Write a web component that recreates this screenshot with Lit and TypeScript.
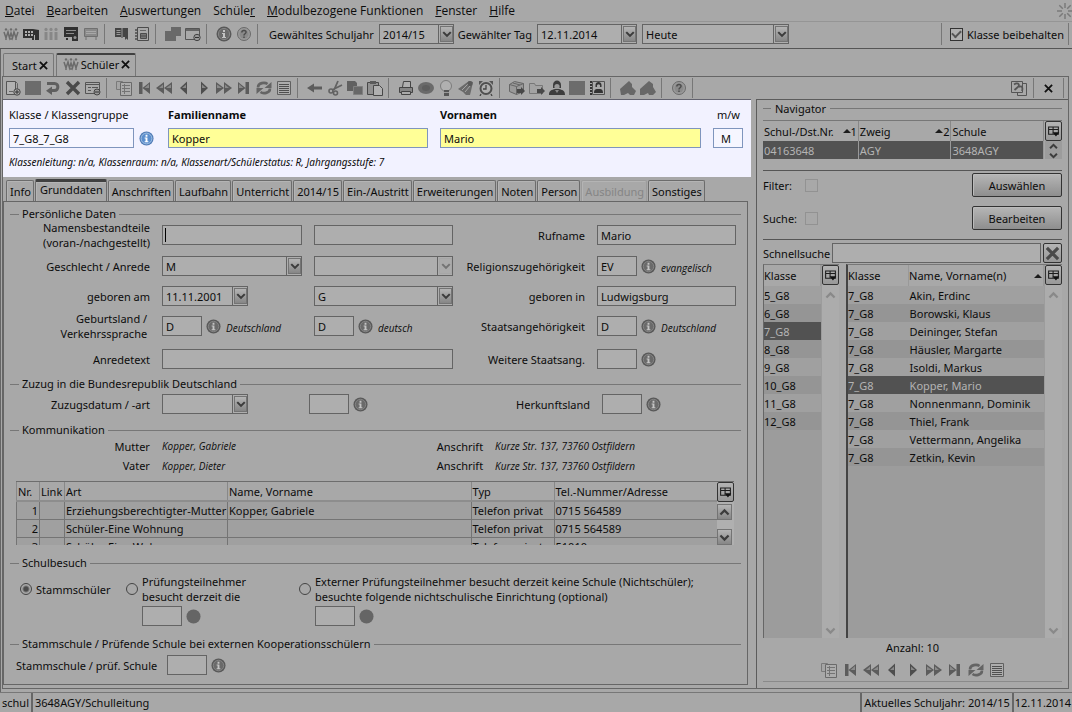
import { LitElement, html, css, svg, nothing } from "lit";
import { customElement, property } from "lit/decorators.js";
import { classMap } from "lit/directives/class-map.js";

const shapes: Record<string, unknown> = {
  pupils: svg`<g fill="#6b6b6b" stroke="#6b6b6b"><circle cx="3" cy="3.4" r="1.2" stroke="none"/><circle cx="8" cy="3.4" r="1.2" stroke="none"/><circle cx="13" cy="3.4" r="1.2" stroke="none"/><path fill="none" stroke-width="1.5" d="M1 6l2 6 2-6 1.500 6L8 7l1.500 5L11 6l2 6 2-6M3 12v2M8 12v2M13 12v2"/></g>`,
  pupilsDim: svg`<g fill="#878787"><circle cx="3" cy="3.400" r="1.600"/><circle cx="8" cy="3.400" r="1.600"/><circle cx="13" cy="3.400" r="1.600"/><path d="M1.500 6h3v8h-3zM6.500 6h3v8h-3zM11.500 6h3v8h-3z"/></g>`,
  building: svg`<path fill="#303030" d="M0 3h10l6 1v10H9v-2H0z"/><path fill="#b0b0b0" d="M2 5h2v2H2zM5 5h2v2H5zM8 5h2v2H8zM2 8h2v2H2zM5 8h2v2H5zM8 8h2v2H8zM11 9h1v5h-1z"/>`,
  boardDark: svg`<path fill="#303030" d="M1 1h14v10H1zM3 12h2v2H3zM9 11h6v4H9z"/><path stroke="#8c8c8c" d="M3 4.500h10M3 7.500h8"/><circle cx="12" cy="11.500" r="1.500" fill="#909090"/>`,
  boardLight: svg`<path fill="#8a8a8a" stroke="#707070" d="M1.500 2.500h13v8h-13zM3 11v3M13 11v3"/><path stroke="#a8a8a8" d="M3 5.500h10M3 7.500h10"/>`,
  book: svg`<path fill="#444" d="M1 2h6l1 1 1-1h5v9H9l-1 1-1-1H1z"/><path stroke="#999" d="M2.500 4.500h4M2.500 6.500h4M2.500 8.500h4M8 3v8"/><path fill="#444" d="M11 9h3v5l-1.500-1.500L11 14z"/>`,
  notebook: svg`<path fill="none" stroke="#4c4c4c" d="M3.500 1.500h11v13h-11z"/><path stroke="#4c4c4c" stroke-width="1.500" d="M1 4h3M1 7h3M1 10h3M1 13h3"/><path fill="#777" stroke="#4c4c4c" d="M6.500 7.500h6v5h-6zM7 10h5"/><path stroke="#666" d="M6 4.500h6"/>`,
  copyDim: svg`<path fill="#696969" d="M6 1h10v9h-5v5H0V5h6z"/>`,
  windowMinus: svg`<path fill="#a9a9a9" stroke="#555" d="M.5 2.500h14v11H.5z"/><path fill="#666" d="M1 3h13v2H1z"/><circle cx="12" cy="11.500" r="3.200" fill="#999" stroke="#444"/><path stroke="#333" d="M10 11.500h4"/>`,
  info: svg`<circle cx="8" cy="8" r="7.500" fill="#585858"/><circle cx="8" cy="8" r="5.600" fill="#6a6a6a" stroke="#868686"/><path fill="#c4c4c4" d="M7 4h2v2H7zM6 7h3v4h1v1H6v-1h1V8H6z"/>`,
  help: svg`<circle cx="8" cy="8" r="6.500" fill="#999" stroke="#6a6a6a"/><circle cx="8" cy="8" r="4.500" fill="#8a8a8a"/><path fill="none" stroke="#4c4c4c" stroke-width="1.500" d="M5.800 6.500C6 3.500 10.500 4 10 6.500 9.800 7.800 8 7.800 8 9.500M8 10.600V12"/>`,
  newDoc: svg`<path fill="#b2b2b2" stroke="#555" d="M1.500 1.500h9v13h-9z"/><path fill="none" stroke="#666" d="M4 11.500h4M10.500 1.500l2 2v6"/><circle cx="12" cy="12" r="3.200" fill="#aaa" stroke="#444"/><path stroke="#333" d="M10 12h4M12 10v4"/>`,
  block: svg`<path fill="#6c6c6c" d="M0 1h16v14H0z"/>`,
  undo: svg`<path fill="none" stroke="#5f5f5f" stroke-width="3" d="M2 3.500h7.500c4.500 0 4.500 7 0 7H6"/><path fill="#5f5f5f" d="M7 6.500v8.500L1 10.700z"/>`,
  cross: svg`<path stroke="#4a4a4a" stroke-width="3.400" d="M2 2l12 12M14 2L2 14"/>`,
  formMinus: svg`<path fill="#aaa" stroke="#555" d="M.5 2.500h14v11H.5z"/><path stroke="#555" d="M1 4.500h13M3 7.500h3M3 10.500h3M7 7.500h6"/><circle cx="12" cy="12" r="3" fill="#999" stroke="#444"/><path stroke="#333" d="M10 12h4"/>`,
  sheets: svg`<path fill="#a5a5a5" stroke="#7a7a7a" d="M.5 1.500h6v8h-6z"/><path fill="#acacac" stroke="#6a6a6a" d="M4.500 2.500h11v13h-11z"/><path stroke="#747474" d="M6 5.500h8M6 8.500h8M6 11.500h8M8.500 4v10"/>`,
  first: svg`<path fill="#5c5c5c" d="M3 2h3.500v12H3zM14 2v12L6.500 8z"/><path fill="#8a8a8a" d="M13 4v4H8.500z"/>`,
  rewind: svg`<path fill="#5c5c5c" d="M8 2v12L0 8zM16 2v12L8 8z"/><path fill="#8a8a8a" d="M7 4.500V8H3zM15 4.500V8h-5z"/>`,
  prev: svg`<path fill="#4e4e4e" d="M11 1.500v13L4 8z"/><path fill="#888" d="M10 4.500V8H6z"/>`,
  next: svg`<path fill="#4e4e4e" d="M5 1.500v13l7-6.500z"/><path fill="#888" d="M6 4.500V8h4z"/>`,
  forward: svg`<path fill="#5c5c5c" d="M0 2v12l8-6zM8 2v12l8-6z"/><path fill="#8a8a8a" d="M1 4.500V8h5zM9 4.500V8h4z"/>`,
  last: svg`<path fill="#5c5c5c" d="M2 2v12l7.500-6zM9.500 2H13v12H9.500z"/><path fill="#8a8a8a" d="M3 4v4h4.500z"/>`,
  refresh: svg`<path fill="none" stroke="#646464" stroke-width="2.600" d="M2 7.500c0-5 7-5.500 9.500-3.500M14 8.500c0 5-7 5.500-9.500 3.500"/><path fill="#646464" d="M15.500 2v6H8.500zM.5 14V8h7z"/>`,
  list: svg`<path fill="#adadad" stroke="#606060" d="M1.500 1.500h13v13h-13z"/><path stroke="#4f4f4f" d="M3 4.500h10M3 6.500h10M3 8.500h10M3 10.500h10M3 12.500h10"/>`,
  arrowLeft: svg`<path fill="#5c5c5c" d="M7 3.500v3h8v3H7v3L0 8z"/>`,
  scissors: svg`<path fill="none" stroke="#626262" stroke-width="1.800" d="M11 1L7 10M15 5L5 10"/><circle cx="4" cy="11" r="2" fill="none" stroke="#626262" stroke-width="1.600"/><circle cx="8.500" cy="13" r="2" fill="none" stroke="#626262" stroke-width="1.600"/>`,
  copy: svg`<path fill="#606060" d="M0 1h8l2 2v8H0z"/><path fill="#686868" stroke="#808080" d="M6.500 6.500h9v8h-9z"/>`,
  paste: svg`<path fill="#919191" stroke="#484848" d="M.5 2.500h11v12H.5z"/><path fill="#5a5a5a" d="M3 1h6v3H3z"/><path fill="#b0b0b0" stroke="#484848" d="M6.500 5.500h6l3 3v7h-9z"/>`,
  printer: svg`<path fill="#afafaf" stroke="#444" d="M4.500 7l1-5.500h7V7"/><path fill="#858585" stroke="#444" d="M1.500 7.500h13v5h-13z"/><path fill="#aaa" stroke="#444" d="M3.500 11.500h9v3h-9z"/>`,
  ellipse: svg`<ellipse cx="8" cy="8" rx="8" ry="6" fill="#6a6a6a"/><ellipse cx="8" cy="8" rx="4" ry="3" fill="#5e5e5e"/>`,
  bulb: svg`<circle cx="8" cy="6" r="5.500" fill="#b0b0b0" stroke="#7b7b7b"/><path fill="#555" d="M6 10h5v6H6z"/><path stroke="#999" d="M6 12.500h5"/>`,
  horn: svg`<path fill="#6a6a6a" d="M0 9l11-8 4 1-2 9-1 4-4 0-3-3z"/><path stroke="#a5a5a5" d="M4 10l6-6M7 12l5-6"/><circle cx="12" cy="3.500" r="2.500" fill="#5a5a5a"/>`,
  clock: svg`<circle cx="8" cy="8.500" r="5.500" fill="#b0b0b0" stroke="#4f4f4f" stroke-width="2"/><path stroke="#444" stroke-width="1.300" fill="none" d="M8 5v4H5M3 14l-1 2M13 14l1 2"/><path fill="#555" d="M1 1h4L1 5zM15 1h-4l4 4z"/>`,
  boxArrow: svg`<path fill="#999" stroke="#666" d="M.5 4.500l5-3 9 2v8l-7 3-7-3z"/><path fill="none" stroke="#666" d="M.5 4.500l7 2 7-3M7.500 6.500v8M4 3l7 2"/><path fill="#484848" d="M8 9h4V7l4 4-4 4v-2H8z"/>`,
  folderArrow: svg`<path fill="#a3a3a3" stroke="#777" d="M.5 3.500h5l1 2h7v8H.5z"/><path fill="#484848" d="M8 9h4V7l4 4-4 4v-2H8z"/>`,
  person: svg`<path fill="#3d3d3d" d="M4 5c0-6 8-6 8 0v3H4zM0 15c0-5 3-5 6-6h4c3 1 6 1 6 6z"/><circle cx="8" cy="6.500" r="2.600" fill="#9a9a9a"/><path fill="#888" d="M6 10l2 3 2-3z"/>`,
  addressBook: svg`<path fill="#aaa" stroke="#555" d="M3.500 1.500h12v13h-12z"/><path stroke="#333" stroke-width="2" stroke-dasharray="2 1" d="M2 1v14"/><path fill="#333" d="M6.500 5c0-4 6-4 6 0v2h-6zM5 13c0-4 2-4 4.500-4s4.500 0 4.500 4z"/><circle cx="9.500" cy="6" r="1.700" fill="#aaa"/>`,
  shape: svg`<path fill="#676767" d="M0 9l9-8 3 3v3l4 4-2 4h-4l-2-2-4 2H1z"/>`,
  shape2: svg`<path fill="#676767" d="M0 9l9-8 4 3v3l3 5-3 3H9l-1-2-4 2H0z"/>`,
  exportPage: svg`<path fill="none" stroke="#555" d="M.5 1.500h11v11H.5zM6.500 12.500v3h9v-12h-4"/><path fill="none" stroke="#555" stroke-width="1.800" d="M3 4.500c3-2 6-1 4.500 2L3.500 10M8 7c3-2 4 1 3 4"/>`,
  columns: svg`<path fill="none" stroke="#1c1c1c" stroke-width="1.300" d="M2 2.500h12v9H2zM2 5.500h12M7.500 2.500v9"/><path fill="#111" d="M7 9h8l-4 5z"/>`,
  spinner: svg`<g stroke="#7a7a7a" stroke-width="1.500"><path d="M8 0v5M8 11v5M0 8h5M11 8h5M2.300 2.300l3.500 3.500M10.200 10.200l3.500 3.500M2.300 13.700l3.500-3.500M10.200 5.800l3.500-3.500"/></g>`,
  chevronDown: svg`<path fill="none" stroke="#3c3c3c" stroke-width="2.800" d="M3 5.500L8 10.500l5-5"/>`,
  chevronUp: svg`<path fill="none" stroke="#3c3c3c" stroke-width="2.800" d="M3 10.500l5-5 5 5"/>`,
  infoBlue: svg`<circle cx="8" cy="8" r="7.500" fill="#4d79b4"/><circle cx="8" cy="8" r="5.800" fill="#5c8fce" stroke="#a9c6e8"/><path fill="#fff" d="M7 4h2v2H7zM6 7h3v4h1v1H6v-1h1V8H6z"/>`,
  disc: svg`<circle cx="8" cy="8" r="7.500" fill="#656565"/>`,
};

const icon = (name: string, size = 16) =>
  html`<svg viewBox="0 0 16 16" width=${size} height=${size} aria-hidden="true">${shapes[name]}</svg>`;

const base = css`
  * { box-sizing: border-box; }
  :host { font: 11px/15px "Noto Sans", "Open Sans", sans-serif; color: #0c0c0c; }
  svg { display: block; flex: none; }
  button, input, select { font: inherit; color: inherit; margin: 0; border-radius: 0; min-width: 0; }
  button { padding: 0; border: 0; background: none; }
  input[type="text"] { width: 100%; height: 20px; padding: 0 3px; border: 1px solid #646464; background: #aeaeae; outline: 0; }
  table { border-collapse: collapse; table-layout: fixed; width: 100%; }
  th { font-weight: 400; text-align: left; }
  th, td { padding: 0 1px; white-space: nowrap; overflow: hidden; }
  .row { display: flex; align-items: center; }
  .split { justify-content: space-between; }
  .tiny { display: grid; place-items: center; border: 1px solid #747474; background: linear-gradient(#b4b4b4, #868686); }
  .off { border-color: #a0a0a0; background: #aaa; opacity: 0.5; }
  .pick { display: grid; place-items: center; width: 17px; height: 20px; border: 1px solid #333; border-radius: 2px; background: linear-gradient(#b4b4b4, #989898); }
`;

const navSteps: [string, string][] = [
  ["sheets", "Liste wählen"], ["first", "Erster"], ["rewind", "Zurückspulen"], ["prev", "Voriger"], ["next", "Nächster"],
  ["forward", "Vorspulen"], ["last", "Letzter"], ["refresh", "Aktualisieren"], ["list", "Listenansicht"],
];

@customElement("tool-strip")
export class ToolStrip extends LitElement {
  @property({ attribute: false }) groups: [string, string][][] = [];
  static styles = [base, css`
    :host { display: flex; align-items: center; }
    button { width: 20px; height: 20px; display: grid; place-items: center; }
    .sep { width: 1px; height: 20px; margin: 0 7px 0 3px; background: #777; }
  `];
  render() {
    return this.groups.map((g) => html`${g.map(([n, label]) => html`<button type="button" aria-label=${label}>${icon(n)}</button>`)}<span class="sep"></span>`);
  }
}

@customElement("combo-box")
export class ComboBox extends LitElement {
  @property() value = "";
  @property() name = "";
  @property({ type: Boolean }) date = false;
  @property({ type: Boolean }) disabled = false;
  static styles = [base, css`
    :host { display: block; }
    .combo { display: grid; grid-template-columns: minmax(0, 1fr) 15px; height: 20px; border: 1px solid #646464; background: #aeaeae; }
    select, .combo input[type="text"] { grid-row: 1; grid-column: 1 / 3; appearance: none; width: 100%; height: 18px; padding: 0 3px; border: 0; background: none; outline: 0; opacity: 1; }
    .combo input[type="text"] { grid-column: 1; }
    .arrow { grid-row: 1; grid-column: 2; padding: 1px; display: block; border: solid #646464; border-width: 0 0 0 1px; }
    .arrow .tiny { width: 13px; height: 16px; }
    span.arrow { pointer-events: none; }
  `];
  render() {
    const tip = html`<span class=${classMap({ tiny: true, off: this.disabled })}>${icon("chevronDown", 12)}</span>`;
    return html`<div class="combo">${this.date
      ? html`<input type="text" aria-label=${this.name} .value=${this.value}><button type="button" class="arrow" aria-label="Kalender">${tip}</button>`
      : html`<select aria-label=${this.name} ?disabled=${this.disabled}><option>${this.value}</option></select><span class="arrow">${tip}</span>`}</div>`;
  }
}

@customElement("pupil-form")
export class PupilForm extends LitElement {
  static styles = [base, css`
    :host { display: flex; flex-direction: column; min-height: 0; }
    .head { display: grid; grid-template-columns: 147fr 260fr 261fr 30fr; column-gap: 12px; padding: 8px 8px 0 6px; height: 78px; background: #f2f2ff; border-top: 1px solid #62626e; align-content: start; }
    .head .who { display: grid; grid-template-columns: 1fr 15px; gap: 0 5px; align-items: center; padding-right: 2px; }
    .head .who label { grid-column: 1 / 3; }
    .head label { display: block; height: 20px; line-height: 14px; white-space: nowrap; }
    .head input[type="text"] { border-color: #7f95bd; background: #f6f6ff; }
    .head .must input[type="text"] { background: #ffff97; }
    .head .must label { font-weight: 700; }
    .head .sex label { text-align: right; padding-right: 3px; }
    .head .sex input { padding-left: 7px; }
    .head p { grid-column: 1 / -1; margin: 6px 0 0; font-size: 10px; line-height: 16px; font-style: italic; }
    .tabs { display: flex; gap: 1px; align-items: flex-end; height: 24px; padding: 0 3px; }
    .tabs button { height: 21px; padding: 1px 2px 0 3px; border: 1px solid #6c6c6c; border-bottom: 0; border-radius: 2px 2px 0 0; white-space: nowrap; box-shadow: inset 1px 1px #b4b4b4; }
    .tabs .on { height: 22px; padding: 0 3px 4px 4px; border-top: 3px solid #404040; }
    .tabs .dead { color: #858585; border-color: #9b9b9b; }
    .sheet { flex: 1; margin-right: 3px; padding: 5px 6px 0; border: 1px solid #666; min-height: 0; }
    fieldset { margin: 0; padding: 0 5px 0 0; border: 0; border-top: 1px solid #777; min-width: 0; }
    legend { margin-left: 9px; padding: 0 3px; line-height: 14px; }
    .grid { display: grid; column-gap: 12px; align-items: center; }
    .personal { grid-template-columns: 140fr 140fr 139fr 120fr 139fr; grid-template-rows: 28px 34px 26px 34px 32px; }
    .moving { grid-template-columns: 140fr 135fr 139fr 130fr 134fr; grid-template-rows: 26px; }
    .contact { grid-template-columns: 140fr 263fr 46fr 241fr; grid-template-rows: 18px 21px; }
    .lab { text-align: right; white-space: nowrap; justify-self: end; }
    .date { width: 86px; }
    .code { display: flex; align-items: center; gap: 4px; }
    .code input[type="text"] { width: 40px; flex: none; }
    .code .note { padding: 4px 0 0 1px; }
    .note { font: italic 10px/12px "Open Sans", sans-serif; white-space: nowrap; }
    .wide { grid-column: 2 / 4; }
    #prefix { background: linear-gradient(#000, #000) 2px 50% / 1px 14px no-repeat #aeaeae; }
    .gap2 { margin-top: 2px; }
    .gap6 { margin-top: 6px; }
    .gap11 { margin-top: 11px; }
    .phones { display: grid; grid-template-columns: minmax(0, 1fr) 17px; grid-template-rows: 63px; height: 64px; margin: 5px 2px 0 6px; overflow: hidden; border-top: 1px solid #6d6d6d; background: #a0a0a0; }
    .phones th { height: 19px; background: #a8a8a8; border-left: 1px solid #888; border-bottom: 2px solid #8d8d8d; }
    .phones td { height: 18px; border: solid #747474; border-width: 0 0 1px 1px; }
    .phones td.n { text-align: right; }
    .phones .rail { background: #b0b0b0; display: flex; flex-direction: column; gap: 2px; }
    .rail .tiny { width: 15px; height: 16px; }
    .rail .tiny:last-child { margin-top: auto; }
    .visit { display: grid; grid-template-columns: 106px 173px minmax(0, 1fr); padding: 4px 0 0 10px; height: 67px; }
    .choice { display: grid; grid-template-columns: 12px minmax(0, 1fr); column-gap: 4px; align-content: start; grid-template-rows: 30px 22px; align-items: center; white-space: nowrap; }
    .choice .code { grid-column: 2; align-self: end; }
    input[type="radio"] { appearance: none; width: 12px; height: 12px; border: 1px solid #444; border-radius: 50%; }
    input[type="radio"]:checked { background: radial-gradient(#4a4a4a 2px, transparent 4px); }
    .base { display: flex; align-items: center; gap: 10px; height: 28px; padding-left: 6px; }
  `];

  code(id: string, value: string, note = "", name = "", glyph = "info") {
    return html`<span class="code"><input type="text" id=${id} aria-label=${name || nothing} .value=${value}>${icon(glyph, 15)}${note ? html`<span class="note">${note}</span>` : nothing}</span>`;
  }

  render() {
    const tabs = ["Info", "Grunddaten", "Anschriften", "Laufbahn", "Unterricht", "2014/15", "Ein-/Austritt", "Erweiterungen", "Noten", "Person", "Ausbildung", "Sonstiges"];
    const phones = [
      ["1", "", "Erziehungsberechtigter-Mutter", "Kopper, Gabriele", "Telefon privat", "0715 564589"],
      ["2", "", "Schüler-Eine Wohnung", "", "Telefon privat", "0715 564589"],
      ["3", "", "Schüler-Eine Wohnung", "", "Telefon privat", "51010"],
    ];
    return html`
      <section class="head">
        <div class="who"><label for="klasse">Klasse / Klassengruppe</label><input type="text" id="klasse" .value=${"7_G8_7_G8"}>${icon("infoBlue", 15)}</div>
        <div class="must"><label for="fam">Familienname</label><input type="text" id="fam" .value=${"Kopper"}></div>
        <div class="must"><label for="vor">Vornamen</label><input type="text" id="vor" .value=${"Mario"}></div>
        <div class="sex"><label for="mw">m/w</label><input type="text" id="mw" .value=${"M"}></div>
        <p>Klassenleitung: n/a, Klassenraum: n/a, Klassenart/Schülerstatus: R, Jahrgangsstufe: 7</p>
      </section>
      <nav class="tabs" role="tablist">${tabs.map((t) => html`<button type="button" role="tab" ?disabled=${t === "Ausbildung"} class=${classMap({ on: t === "Grunddaten", dead: t === "Ausbildung" })}>${t}</button>`)}</nav>
      <div class="sheet">
        <fieldset>
          <legend>Persönliche Daten</legend>
          <div class="grid personal">
            <label class="lab" for="prefix">Namensbestandteile<br>(voran-/nachgestellt)</label>
            <input type="text" id="prefix"><input type="text" aria-label="nachgestellt">
            <label class="lab" for="ruf">Rufname</label><input type="text" id="ruf" .value=${"Mario"}>
            <span class="lab">Geschlecht / Anrede</span>
            <combo-box name="Geschlecht" value="M"></combo-box><combo-box name="Anrede" disabled></combo-box>
            <label class="lab" for="rel">Religionszugehörigkeit</label>${this.code("rel", "EV", "evangelisch")}
            <span class="lab">geboren am</span>
            <combo-box class="date" date name="geboren am" value="11.11.2001"></combo-box><combo-box name="Status" value="G"></combo-box>
            <label class="lab" for="ort">geboren in</label><input type="text" id="ort" .value=${"Ludwigsburg"}>
            <label class="lab" for="land">Geburtsland /&nbsp;<br>Verkehrssprache&nbsp;</label>
            ${this.code("land", "D", "Deutschland")}${this.code("sprache", "D", "deutsch", "Verkehrssprache")}
            <label class="lab" for="staat">Staatsangehörigkeit</label>${this.code("staat", "D", "Deutschland")}
            <label class="lab" for="anrede">Anredetext</label><input type="text" id="anrede" class="wide">
            <label class="lab" for="weitere">Weitere Staatsang.</label>${this.code("weitere", "")}
          </div>
        </fieldset>
        <fieldset class="gap2">
          <legend>Zuzug in die Bundesrepublik Deutschland</legend>
          <div class="grid moving">
            <span class="lab">Zuzugsdatum / -art</span><combo-box class="date" date name="Zuzugsdatum"></combo-box>
            ${this.code("art", "", "", "Zuzugsart")}
            <label class="lab" for="herkunft">Herkunftsland</label>${this.code("herkunft", "")}
          </div>
        </fieldset>
        <fieldset class="gap6">
          <legend>Kommunikation</legend>
          <div class="grid contact">
            <span class="lab">Mutter</span><span class="note">Kopper, Gabriele</span><span class="lab">Anschrift</span><span class="note">Kurze Str. 137, 73760 Ostfildern</span>
            <span class="lab">Vater</span><span class="note">Kopper, Dieter</span><span class="lab">Anschrift</span><span class="note">Kurze Str. 137, 73760 Ostfildern</span>
          </div>
          <div class="phones">
            <table>
              <colgroup><col style="width:23px"><col style="width:25px"><col style="width:163px"><col><col style="width:83px"><col style="width:163px"></colgroup>
              <thead><tr>${["Nr.", "Link", "Art", "Name, Vorname", "Typ", "Tel.-Nummer/Adresse"].map((h) => html`<th>${h}</th>`)}</tr></thead>
              <tbody>${phones.map((r) => html`<tr>${r.map((c, i) => html`<td class=${i ? "" : "n"}>${c}</td>`)}</tr>`)}</tbody>
            </table>
            <div class="rail">
              <button type="button" class="pick" aria-label="Spalten">${icon("columns", 13)}</button>
              <button type="button" class="tiny" aria-label="Nach oben">${icon("chevronUp", 13)}</button>
              <button type="button" class="tiny" aria-label="Nach unten">${icon("chevronDown", 13)}</button>
            </div>
          </div>
        </fieldset>
        <fieldset class="gap11">
          <legend>Schulbesuch</legend>
          <div class="visit">
            <div class="choice"><input type="radio" name="v" id="v1" checked><label for="v1">Stammschüler</label></div>
            <div class="choice"><input type="radio" name="v" id="v2"><label for="v2">Prüfungsteilnehmer<br>besucht derzeit die</label>${this.code("v2c", "", "", "Schule", "disc")}</div>
            <div class="choice"><input type="radio" name="v" id="v3"><label for="v3">Externer Prüfungsteilnehmer besucht derzeit keine Schule (Nichtschüler);<br>besuchte folgende nichtschulische Einrichtung (optional)</label>${this.code("v3c", "", "", "Einrichtung", "disc")}</div>
          </div>
        </fieldset>
        <fieldset>
          <legend>Stammschule / Prüfende Schule bei externen Kooperationsschülern</legend>
          <div class="base"><label for="stamm">Stammschule / prüf. Schule</label>${this.code("stamm", "")}</div>
        </fieldset>
      </div>`;
  }
}

@customElement("school-navigator")
export class SchoolNavigator extends LitElement {
  static styles = [base, css`
    :host { display: flex; flex-direction: column; padding: 0 6px; border: 1px solid #5c5c5c; border-width: 1px 0 0 1px; min-height: 0; }
    .title { display: flex; align-items: center; gap: 4px; height: 16px; margin-bottom: 4px; }
    .title::before, .title::after { content: ""; height: 1px; background: #777; width: 8px; }
    .title::after { flex: 1; }
    .schools { display: grid; grid-template-columns: minmax(0, 1fr) 18px; border-top: 1px solid #777; }
    .schools th { height: 20px; border-right: 1px solid #888; }
    .schools td { height: 18px; border-right: 1px solid #999; }
    .sort { display: inline-flex; align-items: center; }
    .sort::before { content: ""; border: solid transparent; border-width: 0 4px 4px; border-bottom-color: #1c1c1c; }
    .sel td { background: #525252; color: #b4b4b4; }
    .rail { padding-left: 1px; }
    .step { display: grid; width: 17px; height: 9px; place-items: center; background: #9c9c9c; }
    .rule { height: 1px; background: #555; margin: 11px 0 2px; }
    .opt { display: flex; align-items: center; height: 24px; }
    .opt + .opt { margin-top: 9px; }
    .opt label { width: 42px; }
    .opt input { appearance: none; width: 13px; height: 13px; border: 1px solid #929292; }
    .opt button { margin-left: auto; width: 90px; height: 24px; border: 1px solid #333; border-radius: 2px; background: linear-gradient(#b6b6b6, #8e8e8e); box-shadow: inset 1px 1px #bbb; }
    .rule.low { margin: 9px 0 3px; }
    .quick { display: flex; align-items: center; height: 20px; margin-bottom: 1px; gap: 2px; }
    .quick .pick { flex: none; width: 19px; }
    .lists { flex: 1; display: grid; grid-template-columns: 76px minmax(0, 1fr); gap: 7px; min-height: 0; }
    .list { display: grid; grid-template-columns: minmax(0, 1fr) 17px; column-gap: 1px; border-top: 1px solid #777; border-left: 1px solid #666; background: #9c9c9c; }
    .list.dark { border-left: 2px solid #444; }
    .list th { height: 21px; background: #a8a8a8; border-right: 1px solid #999; }
    .list td { height: 18px; }
    .list td, .list th { padding-left: 0; }
    .list td + td { padding-left: 1px; }
    .list tr:nth-child(odd) td { background: #a0a0a0; }
    .list tr:nth-child(even) td { background: #959595; }
    .list tr.sel td { background: #525252; }
    .list .bar { display: flex; flex-direction: column; align-items: center; background: #acacac; }
    .bar > svg { opacity: 0.3; margin-top: 4px; }
    .bar > svg:last-child { margin: auto 0 1px; }
    .count { height: 20px; line-height: 20px; text-align: center; }
    .steps { display: flex; justify-content: center; height: 24px; margin-bottom: 6px; border-bottom: 1px solid #8a8a8a; }
    .steps button { width: 21px; display: grid; place-items: center; }
  `];
  render() {
    const classes = ["5_G8", "6_G8", "7_G8", "8_G8", "9_G8", "10_G8", "11_G8", "12_G8"];
    const names = ["Akin, Erdinc", "Borowski, Klaus", "Deininger, Stefan", "Häusler, Margarte", "Isoldi, Markus", "Kopper, Mario", "Nonnenmann, Dominik", "Thiel, Frank", "Vettermann, Angelika", "Zetkin, Kevin"];
    const bar = html`<div class="bar"><button type="button" class="pick" aria-label="Spalten">${icon("columns", 13)}</button>${icon("chevronUp", 13)}${icon("chevronDown", 13)}</div>`;
    return html`
      <div class="title">Navigator</div>
      <div class="schools">
        <table>
          <colgroup><col style="width:34%"><col style="width:33%"><col style="width:33%"></colgroup>
          <thead><tr><th><div class="row split">Schul-/Dst.Nr.<span class="sort">1</span></div></th><th><div class="row split">Zweig<span class="sort">2</span></div></th><th>Schule</th></tr></thead>
          <tbody><tr class="sel"><td>04163648</td><td>AGY</td><td>3648AGY</td></tr></tbody>
        </table>
        <div class="rail"><button type="button" class="pick" aria-label="Spalten">${icon("columns", 13)}</button>
          <button type="button" class="step" aria-label="Nach oben">${icon("chevronUp", 11)}</button><button type="button" class="step" aria-label="Nach unten">${icon("chevronDown", 11)}</button></div>
      </div>
      <div class="rule"></div>
      <div class="opt"><label for="filter">Filter:</label><input type="checkbox" id="filter"><button type="button">Auswählen</button></div>
      <div class="opt"><label for="suche">Suche:</label><input type="checkbox" id="suche"><button type="button">Bearbeiten</button></div>
      <div class="rule low"></div>
      <div class="quick"><label for="quick">Schnellsuche</label><input type="text" id="quick"><button type="button" class="pick" aria-label="Suche leeren">${icon("cross", 15)}</button></div>
      <div class="lists">
        <div class="list"><div><table><thead><tr><th>Klasse</th></tr></thead>
          <tbody>${classes.map((c) => html`<tr class=${c === "7_G8" ? "sel" : ""}><td>${c}</td></tr>`)}</tbody></table></div>${bar}</div>
        <div class="list dark"><div><table><colgroup><col style="width:31%"><col></colgroup>
          <thead><tr><th>Klasse</th><th><div class="row split">Name, Vorname(n)<span class="sort"></span></div></th></tr></thead>
          <tbody>${names.map((n) => html`<tr class=${n === "Kopper, Mario" ? "sel" : ""}><td>7_G8</td><td>${n}</td></tr>`)}</tbody></table></div>${bar}</div>
      </div>
      <div class="count">Anzahl: 10</div>
      <div class="steps">${navSteps.map(([n, l]) => html`<button type="button" aria-label=${l}>${icon(n)}</button>`)}</div>`;
  }
}

@customElement("app-root")
export class AppRoot extends LitElement {
  static styles = [base, css`
    :host { display: flex; flex-direction: column; height: 100vh; background: #a8a8a8; overflow: hidden; }
    .menu { display: flex; align-items: center; height: 22px; padding: 0 0 0 5px; gap: 12px; border-bottom: 1px solid #959595; font: 12px/16px "Open Sans", sans-serif; overflow: hidden; }
    .menu a { color: inherit; text-decoration: none; white-space: nowrap; }
    .menu svg { margin: 0 -1px 0 auto; }
    .bar { display: flex; align-items: center; height: 27px; padding: 0 3px 2px 1px; border-bottom: 1px solid #555; }
    .bar > .cap { margin: 0 5px 0 4px; white-space: nowrap; }
    .year { width: 75px; }
    .day { width: 100px; }
    .when { width: 147px; margin-left: 5px; }
    .keep { display: flex; align-items: center; gap: 4px; margin-left: auto; height: 22px; padding: 0 4px 0 8px; border: solid #777; border-width: 0 1px; white-space: nowrap; }
    .keep input { appearance: none; width: 13px; height: 13px; border: 1px solid #333; background: #b0b0b0; display: grid; place-items: center; }
    .keep input::after { content: ""; width: 7px; height: 4px; border: solid #555; border-width: 0 0 2px 2px; transform: translateY(-1px) rotate(-45deg); }
    .desk { flex: 1; display: flex; flex-direction: column; min-height: 0; padding: 0 3px 3px 1px; border-left: 1px solid #666; }
    .views { display: flex; gap: 2px; align-items: flex-end; height: 27px; padding-left: 1px; }
    .views button { display: flex; align-items: center; gap: 2px; height: 23px; padding: 0 5px 0 8px; border: 1px solid #777; border-bottom: 0; border-radius: 2px 2px 0 0; }
    .views .on { border-top: 2px solid #404040; padding: 0 5px 3px 6px; }
    .frame { flex: 1; display: flex; flex-direction: column; border: 1px solid #666; min-height: 0; }
    .frame > .row { height: 22px; }
    .end { margin-left: auto; padding-right: 4px; display: flex; align-items: center; }
    .end button { width: 30px; display: grid; place-items: center; height: 20px; border-right: 1px solid #777; }
    .main { flex: 1; display: grid; grid-template-columns: minmax(0, 1fr) 312px; gap: 5px; min-height: 0; }
    pupil-form { padding-bottom: 3px; }
    .status { display: flex; height: 20px; border-top: 1px solid #777; line-height: 20px; }
    .status span { padding: 0 2px; border-right: 2px solid #666; white-space: nowrap; }
    .status .fill { flex: 1; }
    .status span:last-child { border: 0; padding: 0 1px; }
  `];
  render() {
    const top: [string, string][][] = [
      [["pupils", "Schüler"], ["building", "Schule"], ["pupilsDim", "Gruppen"], ["boardDark", "Lehrkräfte"], ["boardLight", "Tafel"]],
      [["book", "Bücher"], ["notebook", "Berichte"]],
      [["copyDim", "Fenster anordnen"], ["windowMinus", "Fenster schließen"]],
      [["info", "Info"], ["help", "Hilfe"]],
    ];
    const tools: [string, string][][] = [
      [["newDoc", "Neu"], ["block", "Speichern"], ["undo", "Rückgängig"], ["cross", "Löschen"], ["formMinus", "Formular"]],
      navSteps,
      [["arrowLeft", "Zurück"], ["scissors", "Ausschneiden"], ["copy", "Kopieren"], ["paste", "Einfügen"]],
      [["printer", "Drucken"], ["ellipse", "Ansicht"], ["bulb", "Hinweis"], ["horn", "Meldung"], ["clock", "Wiedervorlage"]],
      [["boxArrow", "Export"], ["folderArrow", "Ablage"], ["person", "Person"], ["block", "Notiz"], ["addressBook", "Adressbuch"]],
      [["shape", "Wechsel"], ["shape2", "Übergang"]],
      [["help", "Hilfe"]],
    ];
    const x = html`<svg viewBox="0 0 10 10" width="9" height="9" aria-hidden="true"><path stroke="#111" stroke-width="2" d="M1 1l8 8M9 1L1 9"/></svg>`;
    return html`
      <nav class="menu">
        <a href="#"><u>D</u>atei</a><a href="#"><u>B</u>earbeiten</a><a href="#"><u>A</u>uswertungen</a><a href="#">Schüle<u>r</u></a><a href="#"><u>M</u>odulbezogene Funktionen</a><a href="#"><u>F</u>enster</a><a href="#"><u>H</u>ilfe</a>${icon("spinner")}
      </nav>
      <div class="bar">
        <tool-strip .groups=${top}></tool-strip>
        <span class="cap">Gewähltes Schuljahr</span><combo-box class="year" name="Gewähltes Schuljahr" value="2014/15"></combo-box>
        <span class="cap">Gewählter Tag</span><combo-box class="day" date name="Gewählter Tag" value="12.11.2014"></combo-box>
        <combo-box class="when" name="Zeitraum" value="Heute"></combo-box>
        <label class="keep"><input type="checkbox" checked>Klasse beibehalten</label>
      </div>
      <div class="desk">
        <div class="views"><button type="button">Start ${x}</button><button type="button" class="on">${icon("pupils")} Schüler ${x}</button></div>
        <div class="frame">
          <div class="row"><tool-strip .groups=${tools}></tool-strip><div class="end"><button type="button" aria-label="Abkoppeln">${icon("exportPage")}</button><button type="button" aria-label="Schließen">${x}</button></div></div>
          <div class="main"><pupil-form></pupil-form><school-navigator></school-navigator></div>
        </div>
      </div>
      <footer class="status"><span>schul</span><span class="fill">3648AGY/Schulleitung</span><span>Aktuelles Schuljahr: 2014/15</span><span>12.11.2014</span></footer>`;
  }
}
